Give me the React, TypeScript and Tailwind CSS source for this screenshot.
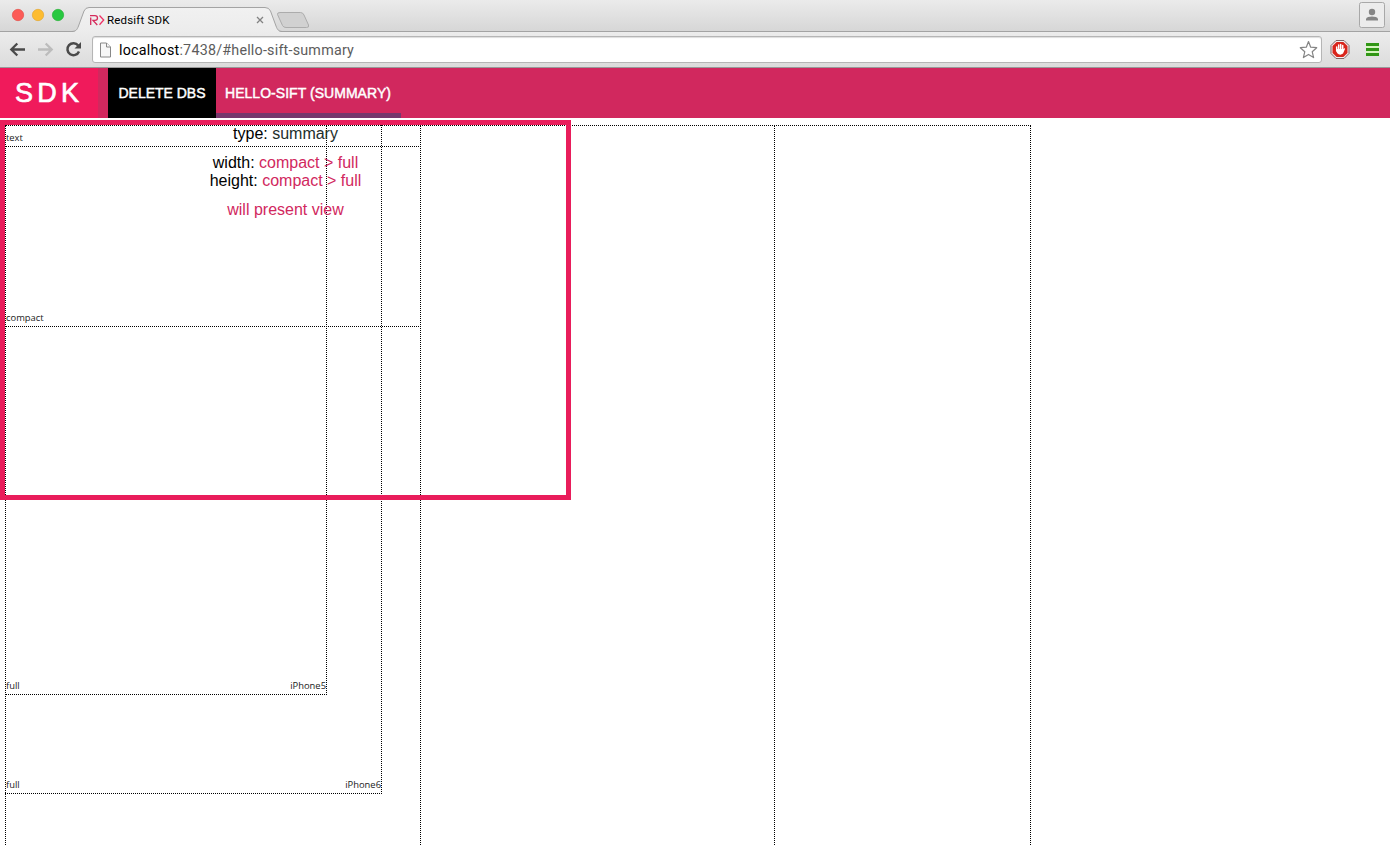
import React from "react";

const outlines = [
  { box: "w-[416px] h-[22px] border-b", left: "text", right: "" },
  { box: "w-[416px] h-[202px] border-b", left: "compact", right: "" },
  { box: "w-[322px] h-[570px] border-r border-b", left: "full", right: "iPhone5" },
  { box: "w-[377px] h-[669px] border-r border-b", left: "full", right: "iPhone6" },
  { box: "w-[416px] h-[736px] border-r", left: "", right: "" },
  { box: "w-[770px] h-[736px] border-r", left: "", right: "" },
  { box: "w-[1026px] h-[736px] border-r border-t border-l", left: "", right: "" },
];

function TabStrip() {
  return (
    <div className="relative flex h-8 bg-gradient-to-b from-[#ebebeb] to-[#d6d6d6]">
      <svg className="absolute inset-0" width="1390" height="32" viewBox="0 0 1390 32" fill="none">
        <defs>
          <linearGradient id="tab" x1="0" y1="7" x2="0" y2="32" gradientUnits="userSpaceOnUse">
            <stop stopColor="#f1f1f1" />
            <stop offset="1" stopColor="#ececec" />
          </linearGradient>
        </defs>
        <path d="M0 31.5H1390" stroke="#a3a3a3" />
        <path d="M72 32C76 31.5 77 30 78.500 26L84 11Q85.500 7.500 89 7.500H265Q269 7.500 270.500 11L276 26C277.500 30 278.500 31.500 282 32Z" fill="url(#tab)" />
        <path d="M72 31.500C76 31 77 30 78.500 26L84 11Q85.500 7.500 89 7.500H265Q269 7.500 270.500 11L276 26C277.500 30 278.500 31 282 31.500" stroke="#a3a3a3" />
        <path d="M280 12.500H300.500Q303 12.500 304 15L308.500 25Q309.500 27.500 306.500 27.500H286Q283.500 27.500 282.500 25.500L277.500 14.500Q277 12.500 280 12.500Z" fill="#d1d1d1" stroke="#acacac" />
        <circle cx="18" cy="15" r="5.700" fill="#fc5b57" stroke="#e2453e" strokeWidth=".6" />
        <circle cx="38" cy="15" r="5.700" fill="#fdbc30" stroke="#e1a126" strokeWidth=".6" />
        <circle cx="58" cy="15" r="5.700" fill="#28c840" stroke="#1fac2d" strokeWidth=".6" />
        <path d="M90.700 25V17.500M90 15.700H95Q97.500 15.700 97.500 18T95 20.400H93L97.300 25" stroke="#d52b5c" strokeWidth="1.300" />
        <path d="M99.500 15.500L103.700 20L99.500 24.700" stroke="#ee3265" strokeWidth="1.300" />
        <path d="M257 17L263 23M263 17L257 23" stroke="#828282" strokeWidth="1.300" />
        <rect x="1359.500" y="2.500" width="25" height="25" rx="2" fill="#ececec" stroke="#a8a8a8" />
        <circle cx="1372" cy="12" r="3.200" fill="#858585" />
        <path d="M1366 20.500V19C1367 15.800 1377 15.800 1378 19V20.500Z" fill="#858585" />
      </svg>
      <span className="relative ml-[107px] mt-[12px] whitespace-nowrap font-['Roboto',sans-serif] text-[11.5px] leading-4 tracking-[0.18px] text-black">Redsift SDK</span>
    </div>
  );
}

function Toolbar() {
  return (
    <div className="flex h-9 items-start border-b border-[#999] bg-gradient-to-b from-[#ececec] to-[#dcdcdc] pt-1">
      <svg width="92" height="28" viewBox="0 0 92 28" fill="none" strokeWidth="2.300">
        <path d="M25 13.500H11.500M17.300 7.500L11.300 13.500L17.300 19.500" stroke="#4a4a4a" />
        <path d="M38 13.500H51.500M45.700 7.500L51.700 13.500L45.700 19.500" stroke="#bcbcbc" />
        <path d="M78.200 9.500A6 6 0 1 0 79 15.500" stroke="#4a4a4a" strokeWidth="2.500" />
        <path d="M81 6V12.500H74.500Z" fill="#4a4a4a" />
      </svg>
      <div className="flex h-[27px] w-[1230px] items-center rounded-[3px] border border-[#b5b5b5] bg-white pl-[6px] pr-[3px] shadow-[inset_0_1px_1px_#ddd]">
        <svg width="13" height="16" viewBox="0 0 13 16" fill="#f7f7f7" stroke="#888">
          <path d="M1.500 1H7.500L11.500 5V15H1.500Z" />
          <path d="M7.500 1V5H11.500" />
        </svg>
        <span className="ml-[7px] whitespace-nowrap font-['Roboto',sans-serif] text-[14.3px] leading-5 tracking-[0.22px] text-[#5c5c5c]">
          <span className="text-black">localhost</span>:7438/#hello-sift-summary
        </span>
        <svg className="ml-auto" width="20" height="20" viewBox="0 0 20 20" fill="white" stroke="#858585" strokeWidth="1.200" strokeLinejoin="round">
          <path d="M10.500 1.500L12.700 7.200L18.700 7.700L14.200 11.700L15.600 17.600L10.500 14.400L5.400 17.600L6.800 11.700L2.300 7.700L8.300 7.200Z" />
        </svg>
      </div>
      <svg className="ml-[7px]" width="60" height="28" viewBox="0 0 60 28">
        <path d="M7 4.500H15L20 9.500V17.500L15 22.500H7L2 17.500V9.500Z" fill="#f3eeee" stroke="#806668" />
        <path d="M7.600 6H14.400L18.500 10V17L14.400 21H7.600L3.500 17V10Z" fill="#d9251c" />
        <path d="M7.700 11V15M9.700 9V14M11.700 8.500V14M13.700 9.500V15" stroke="white" strokeWidth="1.500" strokeLinecap="round" />
        <path d="M7 13H14.400L15.500 12L16 13L14 17.500Q11 20 8 17Z" fill="white" />
        <rect x="37" y="7" width="13" height="13" fill="#d5f5bf" />
        <path d="M37 8.500H50M37 13.500H50M37 18.500H50" stroke="#309615" strokeWidth="3" />
      </svg>
    </div>
  );
}

function Navigation() {
  return (
    <nav className="flex h-[50px] bg-[#d1285e] font-['Liberation_Sans',Arial,sans-serif] text-white">
      <div className="w-[98px] bg-[#f01a5b] pl-[15px] pt-[7px] text-[27px] leading-9 tracking-[4.3px] whitespace-nowrap [-webkit-text-stroke:0.7px_white]">SDK</div>
      <div className="ml-[10px] flex w-[108px] items-center justify-center bg-black text-[14px] tracking-[-0.02px] whitespace-nowrap [-webkit-text-stroke:0.45px_white]">DELETE DBS</div>
      <div className="flex w-[185px] items-center border-b-5 border-[#76376d] pl-[9px] pt-[5px] text-[14px] tracking-[0.04px] whitespace-nowrap [-webkit-text-stroke:0.45px_white]">HELLO-SIFT (SUMMARY)</div>
    </nav>
  );
}

export default function App() {
  return (
    <div className="h-[846px] w-[1390px] overflow-hidden bg-white">
      <TabStrip />
      <Toolbar />
      <Navigation />
      <main className="relative h-[728px] overflow-hidden pt-[2px]">
        <section className="relative z-10 h-[380px] w-[571px] border-5 border-[#e91d5b] text-center font-['Liberation_Sans',Arial,sans-serif] text-[16px] leading-[18px] text-black">
          <p className="text-[#222e2b]"><span className="text-black">type:</span> summary</p>
          <p className="mt-[11px]">width: <span className="text-[#d1285e]">compact &gt; full</span></p>
          <p>height: <span className="text-[#d1285e]">compact &gt; full</span></p>
          <p className="mt-[11px] text-[#d1285e]">will present view</p>
        </section>
        <div className="absolute left-[5px] top-[7px] font-['Open_Sans',sans-serif] text-[9.4px] leading-3 text-[#222]">
          {outlines.map((o, i) => (
            <div key={i} className={`absolute left-0 top-0 flex items-end justify-between border-dotted border-black pb-[2px] pl-[1px] ${o.box}`}>
              <span>{o.left}</span>
              <span>{o.right}</span>
            </div>
          ))}
        </div>
      </main>
    </div>
  );
}
